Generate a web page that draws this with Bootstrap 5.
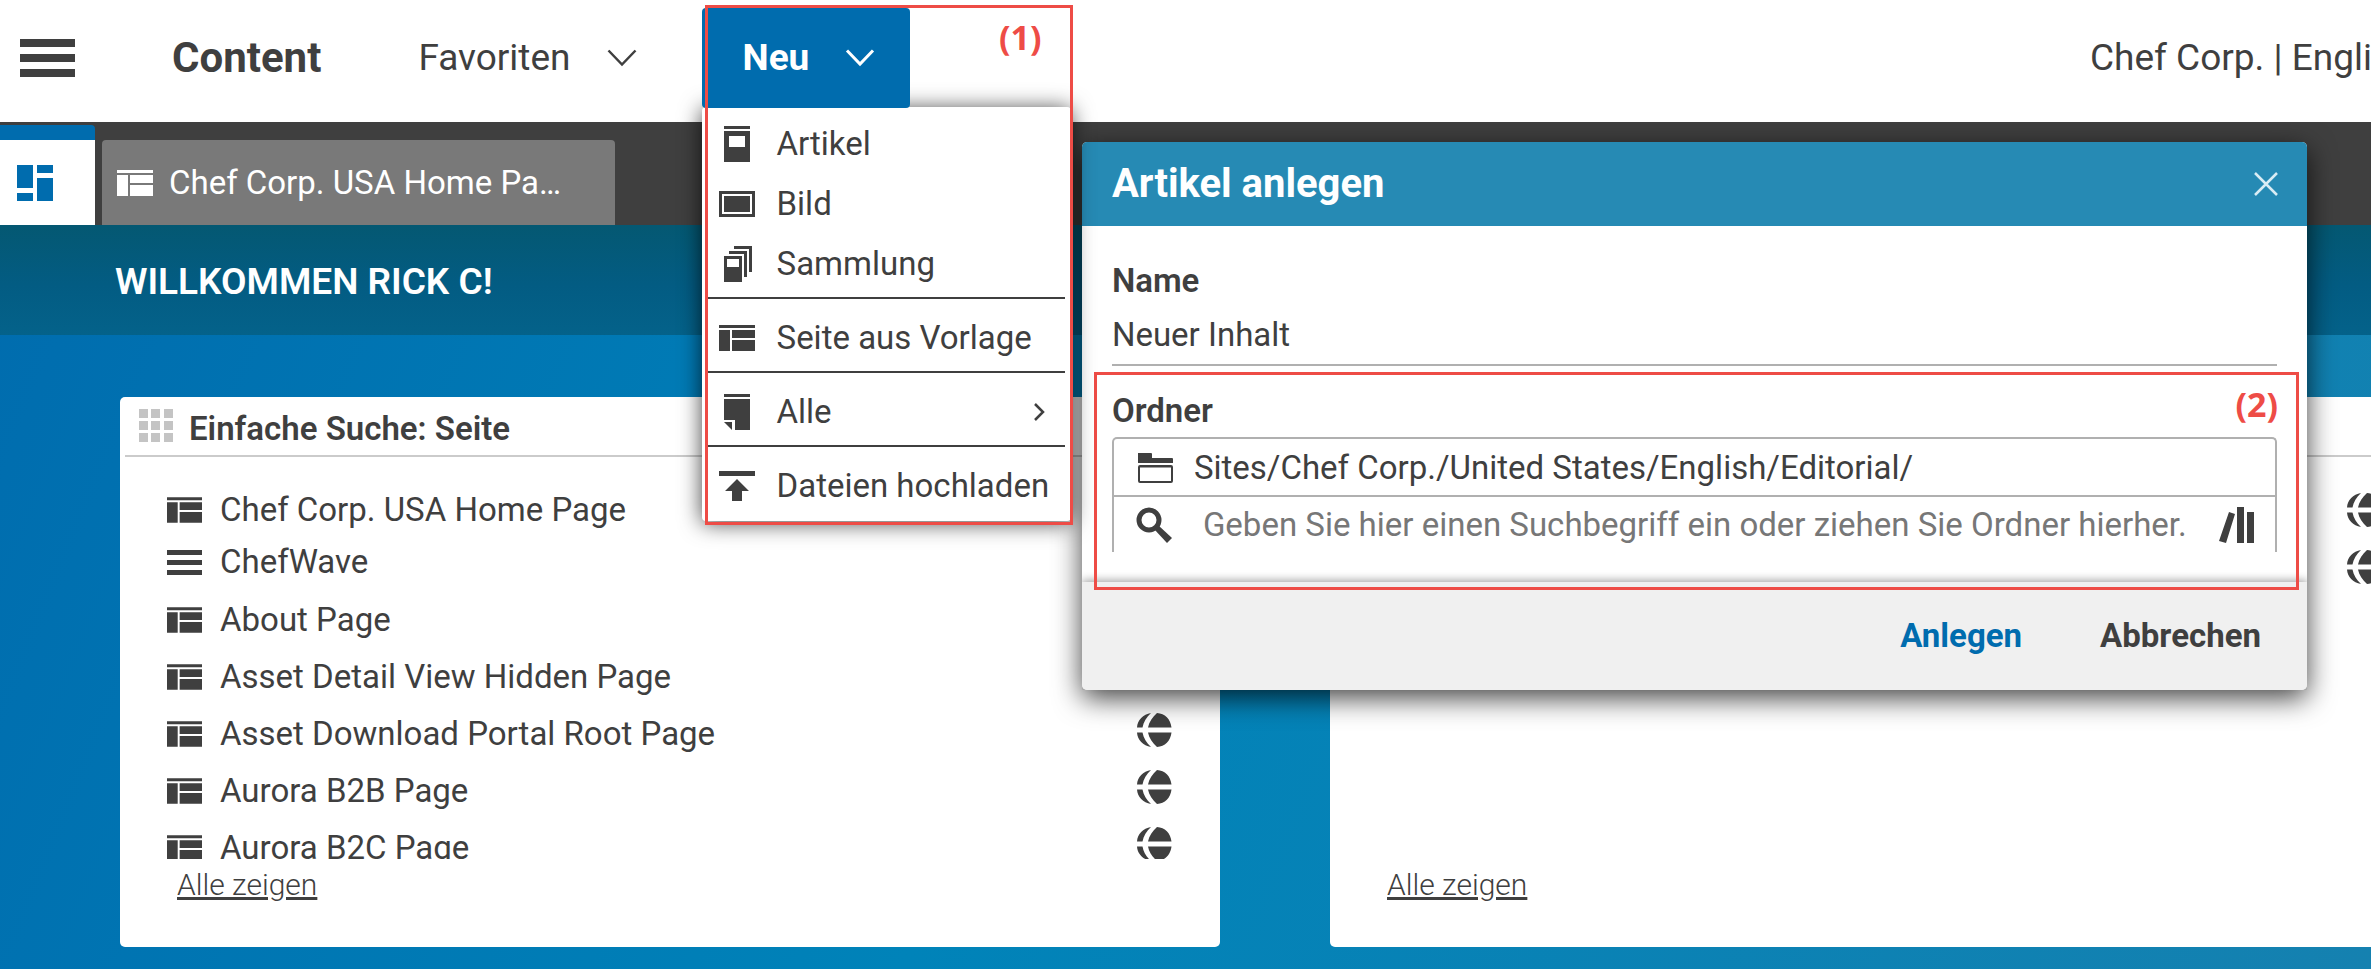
<!DOCTYPE html>
<html lang="de">
<head>
<meta charset="utf-8">
<meta name="viewport" content="width=device-width, initial-scale=1">
<title>Content – Artikel anlegen</title>
<link rel="stylesheet" href="https://cdn.jsdelivr.net/npm/bootstrap@5.3.0/dist/css/bootstrap.min.css">
<style>
  :root { --ink: #3f3f3f; --brand: #006cae; --line: #b0b0b0; --note: #ee4c46; }
  body { font-family: Roboto, "Liberation Sans", sans-serif; font-size: 33px; line-height: 40px; color: var(--ink); overflow: hidden; background: #fff; }
  svg { display: block; flex: none; fill: currentColor; }
  button { color: inherit; }
  .studio { min-height: 100vh; }

  .topbar { height: 122px; padding: 8px 0 14px 20px; z-index: 3; }
  .plain-btn { border: 0; background: none; padding: 0; }
  .app-name { font-size: 42px; margin-left: 97px; }
  .nav-text { font-size: 37px; }
  .fav-btn { margin-left: 97px; gap: 36px; }
  .new-wrap { margin-left: 65px; }
  .new-btn { width: 208px; height: 100px; padding-left: 41px; gap: 36px; background: var(--brand); color: #fff; border-radius: 4px; z-index: 2; }
  .site-label { width: 281px; line-height: 50px; }

  .new-menu { position: absolute; top: 99px; left: 0; width: 369px; height: 414px; padding: 6px 0; background: #fff; border-radius: 4px; box-shadow: 0 2px 22px rgba(0,0,0,.75); z-index: 1; }
  .new-menu button { height: 60px; width: 100%; padding: 2px 0 0 17px; gap: 22px; }
  .new-menu hr { margin: 4px 6px 8px 6px; border: 0; height: 2px; background: var(--ink); opacity: 1; }
  .note { position: absolute; border: 3px solid var(--note); z-index: 4; pointer-events: none; }
  .note span { position: absolute; color: var(--note); font: bold 34px/40px "Open Sans", sans-serif; right: 18px; top: 9px; }
  .note-menu { left: 3px; top: -3px; width: 368px; height: 520px; }
  .note-menu span { right: 28px; }
  .note-folder { left: 12px; right: 8px; top: 230px; height: 218px; }

  .tabbar { height: 103px; padding-top: 3px; gap: 7px; background: var(--ink); }
  .home-tab { width: 95px; padding-left: 17px; border-top: 15px solid var(--brand); border-top-right-radius: 4px; background: #fff; color: var(--brand); }
  .doc-tab { width: 513px; margin-top: 15px; padding-left: 15px; gap: 16px; background: #797979; color: #fff; border-radius: 4px 4px 0 0; }

  .desk { background: linear-gradient(112deg, #006cae 0, #0083b9 45%, #1581b0 100%); }
  .welcome { height: 110px; padding: 3px 0 0 115px; font-size: 37px; font-weight: 600; color: #fff; background: linear-gradient(#045872, #035c83 55%, #04628a); }
  .boards { padding: 62px 0 22px 120px; gap: 110px; }
  .panel { flex: 0 0 1100px; height: 550px; background: #fff; border-radius: 5px; }
  .panel-head { height: 60px; margin: 0 5px; padding: 6px 0 0 14px; gap: 16px; border-bottom: 2px solid #cbcbcb; font-weight: 600; }
  .panel-list { height: 402px; margin: 0; padding: 24px 48px 0 47px; overflow: hidden; }
  .panel-list li { height: 57px; gap: 18px; }
  .panel-list li.tight { height: 53px; }
  .show-all { margin-left: 57px; font-size: 30px; line-height: 36px; font-weight: 300; color: var(--ink); text-decoration-thickness: 3px; }

  .dialog-box { position: absolute; top: 142px; left: 45.63%; width: 51.67%; background: #fff; border-radius: 5px; box-shadow: 0 8px 28px rgba(0,0,0,.75); z-index: 2; }
  .dialog-head { height: 84px; padding: 0 29px 0 30px; background: #268ab4; color: #fff; border-radius: 5px 5px 0 0; font-size: 40px; font-weight: 700; }
  .dialog-main { height: 356px; padding: 35px 30px 0; }
  .dialog-main label { display: block; font-weight: 600; }
  .name-input { display: block; width: 100%; height: 65px; padding: 3px 0 0; border: 0; border-bottom: 2px solid var(--line); color: var(--ink); margin-bottom: 25px; outline: 0; }
  .folder-box { margin-top: 6px; border: 2px solid var(--line); border-bottom: 0; border-radius: 5px 5px 0 0; }
  .folder-row { height: 58px; padding: 2px 20px 0 23px; gap: 21px; border-bottom: 2px solid var(--line); }
  .search-row { height: 55px; padding: 0 20px 0 22px; gap: 31px; }
  .search-row input { flex: 1; min-width: 0; border: 0; padding: 0; outline: 0; }
  .search-row input::placeholder { color: #777; opacity: 1; }
  .dialog-foot { height: 108px; padding-right: 46px; gap: 78px; background: #f0f0f0; border-radius: 0 0 5px 5px; box-shadow: 0 -2px 8px rgba(0,0,0,.35); clip-path: inset(-12px 0 0 0); }
  .ok-btn { color: var(--brand); }
</style>
</head>
<body>
<svg width="0" height="0" class="position-absolute" aria-hidden="true">
  <symbol id="i-page" viewBox="0 0 36 26"><path d="M0 0h36v3H0zM0 5h11v21H0zM13 5h23v8H13zM13 15h23v11H13z"/></symbol>
  <symbol id="i-globe" viewBox="0 0 36 36"><path d="M15 1C7 2.500 1.500 8 1 15.500h5.500C7.500 10 10.500 5 15 1zM21 1c8 .5 13.500 6 14.500 14.500H12C13 10 16.500 5 21 1zM1 20.500h5.500c1 5.500 4 10.500 8.500 14.500C7 33.500 1.500 28 1 20.500zM12 20.500h23.500C34.500 29 29 34.500 21 35c-4.500-4-8-9-9-14.500z"/></symbol>
  <symbol id="i-down" viewBox="0 0 30 18"><path d="M1.500 1.500 15 15.500 28.500 1.500" fill="none" stroke="currentColor" stroke-width="2.500"/></symbol>
</svg>

<div class="studio position-relative d-flex flex-column">
  <header class="topbar d-flex align-items-center bg-white position-relative">
    <button type="button" class="plain-btn" aria-label="Menü">
      <svg width="55" height="38" viewBox="0 0 55 38"><path d="M0 0h55v8H0zM0 15h55v8H0zM0 30h55v8H0z"/></svg>
    </button>
    <span class="app-name fw-bold">Content</span>
    <button type="button" class="plain-btn fav-btn nav-text d-flex align-items-center">Favoriten
      <svg width="30" height="18"><use href="#i-down"/></svg>
    </button>
    <div class="new-wrap position-relative">
      <button type="button" class="plain-btn new-btn nav-text fw-bold d-flex align-items-center position-relative" aria-expanded="true">Neu
        <svg width="30" height="18" viewBox="0 0 30 18"><path d="M2 1.500 15 15 28 1.500" fill="none" stroke="currentColor" stroke-width="3"/></svg>
      </button>
      <div class="new-menu">
        <button type="button" class="plain-btn d-flex align-items-center">
          <svg width="36" height="36" viewBox="0 0 36 36"><path d="M5 0h26v3H5zM5 5h26v31H5zM10 10v11h16V10z" fill-rule="evenodd"/></svg>Artikel</button>
        <button type="button" class="plain-btn d-flex align-items-center">
          <svg width="36" height="26" viewBox="0 0 36 26"><path d="M0 0h36v26H0zM3 3v20h30V3zM5 5h26v16H5z" fill-rule="evenodd"/></svg>Bild</button>
        <button type="button" class="plain-btn d-flex align-items-center">
          <svg width="36" height="36" viewBox="0 0 36 36"><path d="M15 0h18v26h-3V3H15zM10 5h18v26h-3V8H10zM5 10h18v26H5zM8 13v8h12v-8z" fill-rule="evenodd"/></svg>Sammlung</button>
        <hr>
        <button type="button" class="plain-btn d-flex align-items-center"><svg width="36" height="26"><use href="#i-page"/></svg>Seite aus Vorlage</button>
        <hr>
        <button type="button" class="plain-btn d-flex align-items-center">
          <svg width="36" height="36" viewBox="0 0 36 36"><path d="M5 0h26v3H5zM5 5h26v31H16V26H5zM5 28h8v8z"/></svg>Alle
          <svg class="ms-auto me-4" width="16" height="20" viewBox="0 0 16 20"><path d="M4 2l8 8-8 8" fill="none" stroke="currentColor" stroke-width="2.500"/></svg></button>
        <hr>
        <button type="button" class="plain-btn d-flex align-items-center">
          <svg width="36" height="32" viewBox="0 0 36 32"><path d="M0 1h36v5H0zM18 9l12 12h-7v10H13V21H6z"/></svg>Dateien hochladen</button>
      </div>
      <div class="note note-menu"><span>(1)</span></div>
    </div>
    <div class="site-label nav-text ms-auto text-nowrap overflow-hidden">Chef Corp. | English</div>
  </header>

  <nav class="tabbar d-flex">
    <button type="button" class="plain-btn home-tab d-flex align-items-center" aria-label="Dashboard">
      <svg width="36" height="36" viewBox="0 0 36 36"><path d="M0 0h16v23H0zM0 28h16v8H0zM20 0h16v8H20zM20 13h16v23H20z"/></svg>
    </button>
    <button type="button" class="plain-btn doc-tab d-flex align-items-center"><svg width="36" height="26"><use href="#i-page"/></svg>Chef Corp. USA Home Pa…</button>
  </nav>

  <main class="desk flex-grow-1">
    <div class="welcome d-flex align-items-center">WILLKOMMEN RICK C!</div>
    <div class="boards d-flex">
      <section class="panel">
        <div class="panel-head d-flex align-items-center">
          <svg width="34" height="33" viewBox="0 0 34 33" class="mb-2" color="#c4c4c4"><path d="M0 0h9v9H0zM12 0h9v9h-9zM25 0h9v9h-9zM0 12h9v9H0zM12 12h9v9h-9zM25 12h9v9h-9zM0 24h9v9H0zM12 24h9v9h-9zM25 24h9v9h-9z"/></svg>
          Einfache Suche: Seite
        </div>
        <ul class="panel-list list-unstyled">
          <li class="d-flex align-items-center"><svg width="35" height="26"><use href="#i-page"/></svg>Chef Corp. USA Home Page<svg class="ms-auto mb-2" width="36" height="36"><use href="#i-globe"/></svg></li>
          <li class="tight d-flex align-items-start pt-1"><svg class="mt-2" width="35" height="26" viewBox="0 0 35 26"><path d="M0 0h35v5H0zM0 10h35v5H0zM0 20h35v5H0z"/></svg>ChefWave<svg class="ms-auto mb-2" width="36" height="36"><use href="#i-globe"/></svg></li>
          <li class="d-flex align-items-center"><svg width="35" height="26"><use href="#i-page"/></svg>About Page<svg class="ms-auto mb-2" width="36" height="36"><use href="#i-globe"/></svg></li>
          <li class="d-flex align-items-center"><svg width="35" height="26"><use href="#i-page"/></svg>Asset Detail View Hidden Page<svg class="ms-auto mb-2" width="36" height="36"><use href="#i-globe"/></svg></li>
          <li class="d-flex align-items-center"><svg width="35" height="26"><use href="#i-page"/></svg>Asset Download Portal Root Page<svg class="ms-auto mb-2" width="36" height="36"><use href="#i-globe"/></svg></li>
          <li class="d-flex align-items-center"><svg width="35" height="26"><use href="#i-page"/></svg>Aurora B2B Page<svg class="ms-auto mb-2" width="36" height="36"><use href="#i-globe"/></svg></li>
          <li class="d-flex align-items-center"><svg width="35" height="26"><use href="#i-page"/></svg>Aurora B2C Page<svg class="ms-auto mb-2" width="36" height="36"><use href="#i-globe"/></svg></li>
        </ul>
        <a href="#" class="show-all d-inline-block mt-2">Alle zeigen</a>
      </section>
      <section class="panel">
        <div class="panel-head"></div>
        <ul class="panel-list list-unstyled">
          <li class="d-flex align-items-center"><svg class="ms-auto" width="36" height="36"><use href="#i-globe"/></svg></li>
          <li class="d-flex align-items-center"><svg class="ms-auto" width="36" height="36"><use href="#i-globe"/></svg></li>
        </ul>
        <a href="#" class="show-all d-inline-block mt-2">Alle zeigen</a>
      </section>
    </div>
  </main>

  <form class="dialog-box" role="dialog" aria-label="Artikel anlegen">
    <div class="dialog-head d-flex align-items-center justify-content-between">Artikel anlegen
      <button type="button" class="plain-btn" aria-label="Schließen"><svg width="24" height="24" viewBox="0 0 24 24"><path d="M1 1l22 22M23 1L1 23" stroke="#d9ecf4" stroke-width="2.500"/></svg></button>
    </div>
    <div class="dialog-main">
      <label for="name">Name</label>
      <input id="name" class="name-input" type="text" value="Neuer Inhalt">
      <label for="folder">Ordner</label>
      <div class="folder-box">
        <div class="folder-row d-flex align-items-center">
          <svg width="36" height="32" viewBox="0 0 36 32"><path d="M1 1h13q1 0 1 1v4h20q1 0 1 1v4H1zM3 13h31q2 0 2 2v14q0 2-2 2H3q-2 0-2-2V15q0-2 2-2zM3 15.500V29h31V15.500z" fill-rule="evenodd"/></svg>
          <span>Sites/Chef Corp./United States/English/Editorial/</span>
        </div>
        <div class="search-row d-flex align-items-center">
          <svg width="36" height="36" viewBox="0 0 36 36"><circle cx="13" cy="13" r="10" fill="none" stroke="currentColor" stroke-width="5"/><path d="M18 22l4-4 14 13-5 5z"/></svg>
          <input id="folder" type="text" placeholder="Geben Sie hier einen Suchbegriff ein oder ziehen Sie Ordner hierher.">
          <svg width="36" height="36" viewBox="0 0 36 36"><path d="M10 5l6 2L7 36l-7-2zM18 0h7v36h-7zM28 5h7v31h-7z"/></svg>
        </div>
      </div>
    </div>
    <div class="dialog-foot d-flex align-items-center justify-content-end">
      <button type="submit" class="plain-btn ok-btn fw-bold">Anlegen</button>
      <button type="button" class="plain-btn fw-bold">Abbrechen</button>
    </div>
    <div class="note note-folder"><span>(2)</span></div>
  </form>
</div>
<script src="https://cdn.jsdelivr.net/npm/bootstrap@5.3.0/dist/js/bootstrap.bundle.min.js"></script>
</body>
</html>
